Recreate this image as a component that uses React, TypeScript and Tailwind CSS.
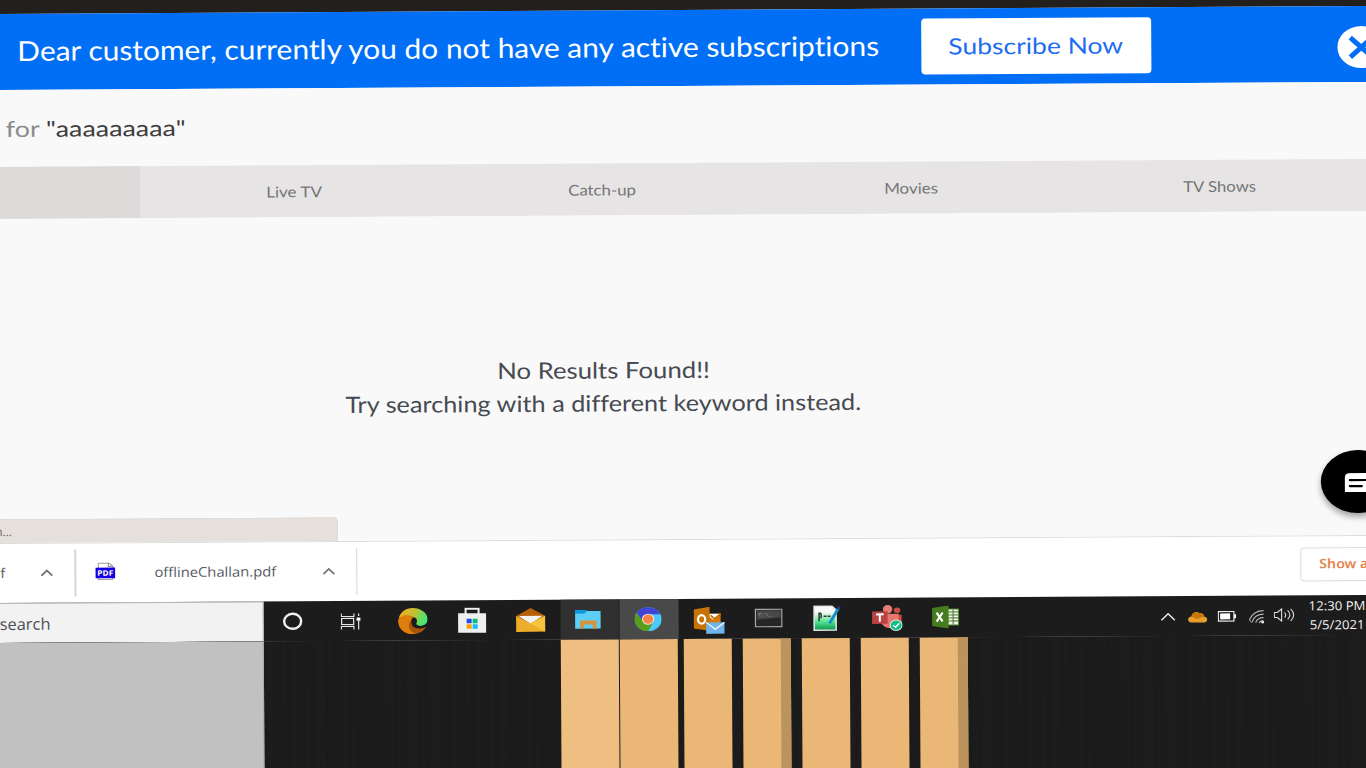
import { useLayoutEffect, useRef, useState } from 'react';
import type { ReactNode } from 'react';

/** Text stretched horizontally so that it fills the width given by its class. */
function FitText({ className, children }: { className: string; children: ReactNode }) {
  const box = useRef<HTMLSpanElement>(null);
  const text = useRef<HTMLSpanElement>(null);
  const [scale, setScale] = useState(1);
  useLayoutEffect(() => {
    if (box.current && text.current) {
      setScale(box.current.offsetWidth / text.current.getBoundingClientRect().width);
    }
  }, []);
  return (
    <span ref={box} className={`block shrink-0 whitespace-nowrap text-left [font-variant-ligatures:none] ${className}`}>
      <span ref={text} className="inline-block origin-left" style={{ transform: `scaleX(${scale})` }}>
        {children}
      </span>
    </span>
  );
}

function Banner() {
  return (
    <div className="flex h-[76.5px] items-center bg-[#006ff6] pl-[25px]">
      <FitText className="w-[862px] pb-0.5 text-[27.5px] leading-8 text-white">
        Dear customer, currently you do not have any active subscriptions
      </FitText>
      <button className="mt-px ml-[42px] flex h-[56px] w-[229.5px] items-center justify-center rounded-[4px] bg-white text-[#1c6df0]">
        <FitText className="w-[175px] text-[22.5px] leading-7">Subscribe Now</FitText>
      </button>
      <svg className="mt-[6px] ml-[186.5px] h-[42px] w-[48px]" viewBox="0 0 48 42">
        <ellipse cx="24" cy="21" rx="24" ry="21" fill="#fff" />
        <path d="M13 11.500 35 31M35 11.500 13 31" stroke="#006ff6" strokeWidth="5" />
      </svg>
    </div>
  );
}

function Tabs() {
  const tabs = [
    { name: 'Live TV', width: 'w-[56px]' },
    { name: 'Catch-up', width: 'w-[68px]' },
    { name: 'Movies', width: 'w-[54px]' },
    { name: 'TV Shows', width: 'w-[73px]' },
  ];
  return (
    <div className="flex h-[52px] bg-[#e6e4e4] text-[15px] leading-5 text-[#757575]">
      <div className="w-[146.5px] shrink-0 bg-[#dcdbd9]" />
      {tabs.map((t) => (
        <div key={t.name} className="flex w-[308.6px] shrink-0 items-center justify-center">
          <FitText className={t.width}>{t.name}</FitText>
        </div>
      ))}
    </div>
  );
}

function Caret() {
  return (
    <svg className="h-[8px] w-[13px] shrink-0" viewBox="0 0 13 8">
      <path d="M1 7 6.5 1.8 12 7" fill="none" stroke="#757575" strokeWidth="1.8" />
    </svg>
  );
}

function PdfIcon() {
  return (
    <svg className="h-[18px] w-[20px] shrink-0" viewBox="0 0 20 18">
      <path d="M3 .7h10.5L17.5 4v13H3z" fill="#fff" stroke="#999" />
      <path d="M13 .7V4h4.5" fill="none" stroke="#888" />
      <rect y="5.2" width="20" height="10.6" fill="#1400e0" />
      <text x="2" y="13.3" fontSize="7.5" fontWeight="700" fill="#fff" textLength="16" lengthAdjust="spacingAndGlyphs" fontFamily="Open Sans, sans-serif">
        PDF
      </text>
    </svg>
  );
}

function Downloads() {
  return (
    <div className="flex h-[60px] items-center border-t border-[#dcdcdc] bg-white font-['Noto_Sans','Open_Sans',sans-serif] text-[13.5px] leading-5 text-[#555b66]">
      <span className="mb-0.5 ml-[5px] w-[5px]">f</span>
      <span className="mb-0.5 ml-[35.5px]"><Caret /></span>
      <div className="mb-px ml-[21px] h-[47px] w-[1.5px] bg-[#d5d5d5]" />
      <span className="mb-1 ml-[19px]"><PdfIcon /></span>
      <FitText className="mb-px ml-[39.5px] w-[122px] font-['Open_Sans','Noto_Sans',sans-serif]">offlineChallan.pdf</FitText>
      <span className="mb-0.5 ml-[45.5px]"><Caret /></span>
      <div className="mb-px ml-[21px] h-[47px] w-[1.5px] bg-[#d5d5d5]" />
      <div className="mb-[3px] ml-[943px] flex h-[34px] w-[96px] items-center rounded-[4px] border border-[#dcdcdc] pl-[18px] text-[13px] font-semibold text-[#e5834d]">
        <FitText className="mb-0.5 w-[57px] font-['Noto_Sans',sans-serif]">Show all</FitText>
      </div>
    </div>
  );
}

const icons: ReactNode[] = [
  <svg key="cortana" className="mr-[4px] h-[20px] w-[22px]" viewBox="0 0 22 20">
    <ellipse cx="11" cy="10" rx="8.500" ry="7.500" fill="none" stroke="#f1f1f1" strokeWidth="2.400" />
  </svg>,
  <svg key="tasks" className="mr-[5px] h-[17px] w-[20px]" viewBox="0 0 20 17">
    <path d="M.7.5v3h12.600v-3M.7 16.500v-3h12.600v3M1 5.500h12v6H1zM18 .5v2.500M18 8v8.500" fill="none" stroke="#e6e6e6" strokeWidth="1.200" />
    <rect x="16" y="4.500" width="4" height="3.300" fill="#fff" />
  </svg>,
  <svg key="edge" className="h-[27px] w-[30px]" viewBox="0 0 30 27">
    <defs>
      <linearGradient id="edgeTop" x1="0" x2="1" y1="0" y2=".4">
        <stop stopColor="#f8ad22" />
        <stop offset=".55" stopColor="#c5bf30" />
        <stop offset="1" stopColor="#45e875" />
      </linearGradient>
    </defs>
    <path d="M1 11C3 4 8 .5 15 .5c8 0 15 5 15 11 0 5-4 7-9 7-3 0-5-1-4-3 3-3 0-7-6-7-5 0-8 1-10 2.500z" fill="url(#edgeTop)" />
    <path d="M.5 12C3 8 8 6.500 12 8c5 1.500 6 4 5 6-2-1-5 0-5 4 0 4 4 8 7 8.200C8 28 0 22 .5 12z" fill="#de7e0b" />
    <path d="M13 13c-4 5-1 12 5 13.200 5-.5 9-4 10.500-7.200-5 3-12 2.500-14-1-1-2-.5-4 .5-5z" fill="#a9560d" />
    <ellipse cx="16.500" cy="13.500" rx="2.800" ry="3.600" fill="#1c1c1c" />
    <path d="M15 14c-1 6 6 8 13 5l1-2c-4 2-9 2-11-1z" fill="#1c1c1c" />
  </svg>,
  <svg key="store" className="mb-px h-[26px] w-[29px]" viewBox="0 0 29 26">
    <path d="M8 7V1.500h13V7" fill="none" stroke="#f2f2f2" strokeWidth="2" />
    <path d="M.5 6h28v19.500H.5z" fill="#efefef" />
    <path d="M9 11.500h5v4.500H9z" fill="#234de8" />
    <path d="M15 11.500h5v4.500h-5z" fill="#0dbd7d" />
    <path d="M9 17h5v4.500H9z" fill="#f5a400" />
    <path d="M15 17h5v4.500h-5z" fill="#13bbff" />
  </svg>,
  <svg key="mail" className="h-[24px] w-[30px]" viewBox="0 0 30 24">
    <path d="M.5 8 15 0l14.500 8v5H.5z" fill="#b65f08" />
    <path d="M3 8h24L15 16z" fill="#f2f2f2" />
    <path d="M.5 8 15 15.500 29.500 8v16H.5z" fill="#eeae2b" />
    <path d="M29.500 8v16L15 15.500z" fill="#f5c63c" />
  </svg>,
  <svg key="files" className="mr-[3px] h-[20px] w-[27px]" viewBox="0 0 27 20">
    <path d="M.5.500h10.500l1.500 1H26V19H.5z" fill="#5dcef8" />
    <path d="M.5.500h10.500l1.500 1L10 4H.5z" fill="#0798dc" />
    <path d="M5.500 19v-8h16.500v8h-4v-4H9.500v4z" fill="#d4953e" />
  </svg>,
  <svg key="chrome" className="mr-[3px] h-[24px] w-[27px]" viewBox="0 0 27 24" preserveAspectRatio="none">
    <ellipse cx="13.500" cy="12" rx="13.500" ry="12" fill="#4ac9fb" />
    <path d="M2 5.800A13.500 12 0 0 1 25.700 7H13.500L8 14z" fill="#4145d6" />
    <path d="M2 5.800A13.500 12 0 0 0 13.500 24L18.500 15 8.500 14z" fill="#579e1d" />
    <ellipse cx="13.500" cy="12" rx="6.200" ry="5.500" fill="#f8e9df" />
    <ellipse cx="13.500" cy="12" rx="5.200" ry="4.600" fill="#fa8547" />
  </svg>,
  <svg key="outlook" className="-mb-[3px] h-[27px] w-[31px]" viewBox="0 0 31 27">
    <path d="M14 7h13v12H14z" fill="#d87908" />
    <path d="M15 7h12l-7 6-5-3z" fill="#fff" />
    <path d="M17 8.500l4 3.500 6-5" fill="none" stroke="#c46e06" strokeWidth="1.800" />
    <path d="M0 2.500 16 0v24L0 21.500z" fill="#c87305" />
    <ellipse cx="8" cy="12.500" rx="3.600" ry="4.200" fill="none" stroke="#fff" strokeWidth="2.200" />
    <path d="M12.500 15.500H31V27H12.500z" fill="#70b4ec" />
    <path d="m12.500 15.500 9.200 7L31 15.500" fill="none" stroke="#fff" strokeWidth="1.200" />
  </svg>,
  <svg key="console" className="mb-px h-[19px] w-[28px]" viewBox="0 0 28 19">
    <rect x=".7" y=".7" width="26.600" height="17.600" fill="#262626" stroke="#a8a8a8" strokeWidth="1.400" />
    <path d="M2 2h24v7L2 11z" fill="#484848" />
    <text x="4" y="8" fontSize="5.500" fill="#aaa" fontFamily="Liberation Mono, monospace">C:\_</text>
  </svg>,
  <svg key="editor" className="mr-[3px] h-[26px] w-[28px]" viewBox="0 0 28 26">
    <defs>
      <linearGradient id="page" x2="0" y2="1">
        <stop offset=".25" stopColor="#f7faf7" />
        <stop offset=".65" stopColor="#55e292" />
        <stop offset="1" stopColor="#08964d" />
      </linearGradient>
    </defs>
    <path d="M1.500 1h18l4 4v20h-22z" fill="url(#page)" stroke="#e8e8e8" strokeWidth="1.500" />
    <path d="M8.500 8H6.500v8M8.500 8v5M11 11h3M15 11h3" fill="none" stroke="#333" strokeWidth="1.500" />
    <path d="m17 18 9-15" stroke="#148fc9" strokeWidth="3" />
    <path d="m25 4 2-3" stroke="#26327d" strokeWidth="2.500" />
  </svg>,
  <svg key="teams" className="h-[26px] w-[31px]" viewBox="0 0 31 26">
    <ellipse cx="16" cy="4.500" rx="4.700" ry="4.200" fill="#e97c75" />
    <ellipse cx="25.500" cy="5.500" rx="3.300" ry="2.800" fill="#c94e48" />
    <path d="M22 10h8v7c0 4-4 6-8 4z" fill="#c74b47" />
    <path d="M9 9h18v7c0 10-16 10-18 0z" fill="#e8766f" />
    <path d="M.5 6.500h15.500V19H.5z" fill="#b94343" />
    <path d="M4.500 9.500h7.500M8.200 9.500V17" stroke="#fff" strokeWidth="2" />
    <ellipse cx="24.500" cy="20.500" rx="6" ry="5.300" fill="#0abd80" stroke="#e8f4ed" strokeWidth="1" />
    <path d="m21.500 20.500 2.300 2 4-4" fill="none" stroke="#fff" strokeWidth="1.500" />
  </svg>,
  <svg key="excel" className="mb-px mr-[1px] h-[23px] w-[28px]" viewBox="0 0 28 23">
    <path d="M15 3.500h12v16H15z" fill="#f1f6ed" stroke="#4d7c26" />
    <path d="M16 6.500h11M16 9.500h11M16 12.500h11M16 15.500h11M21.500 4v15" stroke="#568139" strokeWidth="1.100" />
    <path d="M.5 2.500 17 0v23L.5 20.500z" fill="#477b20" />
    <path d="m5 7 6 9M11 7l-6 9" stroke="#fff" strokeWidth="2.200" />
  </svg>,
];

function Taskbar() {
  return (
    <div className="flex h-[40px] bg-[#1c1c1c]">
      <div className="mr-[1.500px] flex w-[267.500px] shrink-0 items-center border-r border-t-[1.500px] border-[#b5b5b5] bg-[#f2f2f2] pl-[4px] pt-px font-['Open_Sans',sans-serif] text-[16px] leading-6 text-[#4b5057]">
        <FitText className="w-[51px]">search</FitText>
      </div>
      {icons.map((icon, i) => (
        <div
          key={i}
          className={`flex w-[59.200px] shrink-0 items-center justify-center ${
            i === 5 ? 'border-r border-[#202020] bg-[#303030]' : i === 6 ? 'w-[58.200px] mr-px bg-[#494949]' : ''
          }`}
        >
          {icon}
        </div>
      ))}
      <div className="ml-[184.500px] mt-px flex shrink-0 items-center">
        <svg className="h-[9px] w-[15px]" viewBox="0 0 15 9">
          <path d="m.8 8 6.700-6.500L14.200 8" fill="none" stroke="#eee" strokeWidth="1.400" />
        </svg>
        <svg className="ml-[12px] h-[12px] w-[20px]" viewBox="0 0 20 12">
          <path d="M3 11.500C-1 10 0 5.500 4 5.500 4 1 10 0 12 2.500c2-.5 4 0 4.500 3C20 6 21 10 17 11.500z" fill="#e8a02d" />
          <path d="M4 5.500C4 1 10 0 12 2.500c2-.5 4 0 4.500 3L9 8z" fill="#cb7608" />
        </svg>
        <svg className="ml-[10px] h-[11px] w-[19px]" viewBox="0 0 19 11">
          <path d="M.7.700h15.600v9.600H.7z" fill="none" stroke="#eee" strokeWidth="1.200" />
          <path d="M2.500 2.500h10v6h-10zM16.500 3.500h2v4h-2z" fill="#fff" />
        </svg>
        <svg className="ml-[12px] h-[14px] w-[17px]" viewBox="0 0 17 14">
          <path d="M.7 10C3 5 8 1 15 1M3.500 12C5 8 9 4.500 15 4.500M7 13c1-3 4-5 8-5M10.500 13.500c.5-1.500 2-2.500 4-2.500" fill="none" stroke="#b5b5b5" strokeWidth="1.200" />
          <path d="M.8 10c1 2 2 3 3 3" fill="none" stroke="#999" />
          <circle cx="14" cy="12.500" r="1.500" fill="#eee" />
        </svg>
        <svg className="mb-0.5 ml-[8px] h-[15px] w-[22px]" viewBox="0 0 22 15">
          <path d="M.7 5h3L8 1.500v12L3.700 10h-3zM11 5c1.500 2 1.500 3.500 0 5M14 3c3 3 3 6 0 9M17 1.500c4 4 4 8 0 12" fill="none" stroke="#ddd" strokeWidth="1.100" />
        </svg>
      </div>
      <div className="ml-[13px] flex shrink-0 flex-col items-center justify-center font-['Open_Sans',sans-serif] text-[12.500px] leading-[19px] text-[#f2f2f2]">
        <FitText className="w-[57px]">12:30 PM</FitText>
        <FitText className="w-[55px]">5/5/2021</FitText>
      </div>
    </div>
  );
}

function Bars() {
  return (
    <div className="flex h-[160px] bg-[#1c1c1c] bg-[repeating-linear-gradient(90deg,#1c1c1c_0px,#1c1c1c_8px,#191919_9px,#1c1c1c_11px,#1a1a1a_17px,#1d1d1d_23px)]">
      <div className="w-[267.500px] shrink-0 border-r border-[#aaa] bg-[#c1c1c1]" />
      <div className="ml-[297px] w-[58px] shrink-0 bg-[#efbf82]" />
      <div className="ml-[1px] w-[58px] shrink-0 bg-[#ebb776]" />
      <div className="ml-[6px] w-[48.500px] shrink-0 bg-[#ebb776]" />
      <div className="ml-[10.500px] w-[48.500px] shrink-0 border-r-[10.500px] border-[#bb935c] bg-[#ebb776]" />
      <div className="ml-[10.500px] w-[48.500px] shrink-0 bg-[#ebb776]" />
      <div className="ml-[10.500px] w-[48.500px] shrink-0 bg-[#ebb776]" />
      <div className="ml-[10.500px] w-[48.500px] shrink-0 border-r-[10.500px] border-[#bb935c] bg-[#ebb776]" />
    </div>
  );
}

export default function App() {
  return (
    <div className="h-[768px] w-[1366px] overflow-hidden bg-[#231f1c] font-['Lato',sans-serif]">
      <div className="-ml-2 flex w-[1400px] origin-[8px_0px] rotate-[-0.335deg] flex-col bg-[#f9f9f9]">
        <div className="h-[13.500px] bg-[#231f1c]" />
        <Banner />
        <div className="flex h-[77px] items-center bg-[#f9f9f9] pl-[12.500px] pt-px text-[22px] leading-7">
          <FitText className="w-[180px] text-[#3f3f3f]">
            <span className="text-[#8b8b8b]">for </span>"aaaaaaaaa"
          </FitText>
        </div>
        <Tabs />
        <div className="relative flex h-[324px] flex-col bg-[#f9f9f9] pl-[351px] pt-[138px] text-[22.500px] leading-[33px] text-[#474a50]">
          <div className="flex w-[516px] flex-col items-center">
            <FitText className="w-[213px]">No Results Found!!</FitText>
            <FitText className="w-[516px]">Try searching with a different keyword instead.</FitText>
          </div>
          <div className="absolute bottom-0 left-0 flex h-[24px] w-[343px] items-center rounded-tr-[5px] border-r border-t border-[#dddad7] bg-[#e5e0dc] pl-[5px] font-['Open_Sans',sans-serif] text-[12px] leading-4 text-[#76605b]">
            <span className="-ml-[5px]">n...</span>
          </div>
          <div className="absolute left-[1326px] top-[238.500px] flex h-[63px] w-[74px] items-center rounded-[50%] bg-black pl-[22.500px] pt-0.5 shadow-[0_4px_6px_rgba(0,0,0,0.35)]">
            <svg className="h-[19px] w-[30px]" viewBox="0 0 30 19">
              <path d="M1 19V5q0-5 5-5h20q4 0 4 5v14z" fill="#fff" />
              <path d="M6 7h20M6 13h12" stroke="#000" strokeWidth="2.200" strokeLinecap="round" />
            </svg>
          </div>
        </div>
        <Downloads />
        <Taskbar />
        <Bars />
      </div>
    </div>
  );
}
